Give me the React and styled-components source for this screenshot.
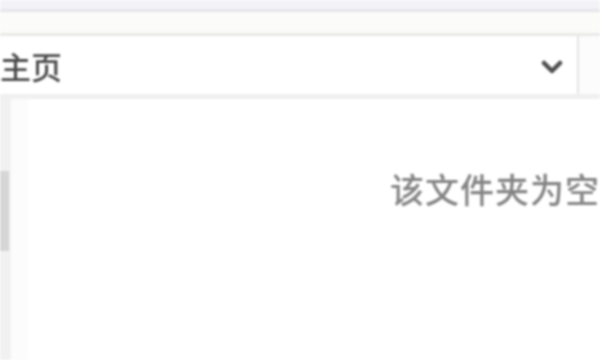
import React from 'react';
import styled, { createGlobalStyle } from 'styled-components';

const GlobalStyle = createGlobalStyle`
  html, body {
    margin: 0;
    padding: 0;
    background: #ffffff;
    overflow: hidden;
  }
  body {
    font-family: 'Noto Sans CJK SC', 'Noto Sans', sans-serif;
  }
`;

function Chevron() {
  return (
    <svg width="22" height="18" viewBox="0 0 22 18" fill="none">
      <path d="M3 5 L11 13 L19 5" stroke="#505050" strokeWidth="4.5" strokeLinecap="round" strokeLinejoin="round" />
    </svg>
  );
}

function App() {
  return (
    <>
      <GlobalStyle />
      <Window>
        <TitleStrip />
        <ToolStrip />
        <SelectRow>
          <SelectLabel>主页</SelectLabel>
          <ChevronBox>
            <Chevron />
          </ChevronBox>
          <Divider />
          <SideButton />
        </SelectRow>
        <Body>
          <Scrollbar>
            <Thumb />
          </Scrollbar>
          <Gutter />
          <Content>
            <EmptyText>该文件夹为空</EmptyText>
          </Content>
        </Body>
      </Window>
    </>
  );
}

export default App;

const Window = styled.div`
  width: 600px;
  height: 360px;
  display: flex;
  flex-direction: column;
  overflow: hidden;
  filter: blur(1.1px);
`;
const TitleStrip = styled.div`
  height: 9px;
  background: #f3f2f7;
  border-bottom: 3px solid #e6e6eb;
`;
const ToolStrip = styled.div`
  height: 21px;
  background: #fbfbfa;
  border-bottom: 3px solid #e9e9e7;
`;
const SelectRow = styled.div`
  height: 58px;
  display: flex;
  align-items: center;
  background: #ffffff;
  border-bottom: 5px solid #f0f0f0;
`;
const SelectLabel = styled.div`
  flex: 1;
  font-size: 31px;
  font-weight: 500;
  line-height: 1;
  color: #4a4a4a;
`;
const ChevronBox = styled.div`
  width: 24px;
  display: flex;
  justify-content: center;
  margin-right: 13px;
  padding-top: 4px;
`;
const Divider = styled.div`
  width: 2px;
  height: 100%;
  background: #e4e4e4;
`;
const SideButton = styled.div`
  width: 21px;
  height: 100%;
  background: #fcfcfc;
`;
const Body = styled.div`
  flex: 1;
  display: flex;
  background: #ffffff;
`;
const Scrollbar = styled.div`
  width: 10px;
  background: #f1f1f1;
  padding-top: 72px;
`;
const Thumb = styled.div`
  height: 80px;
  background: #d6d6d6;
`;
const Gutter = styled.div`
  width: 18px;
  border-left: 2px solid #f2f2f2;
  background: #fcfcfc;
`;
const Content = styled.div`
  flex: 1;
  display: flex;
  justify-content: flex-start;
  padding-left: 362px;
  padding-top: 73px;
  white-space: nowrap;
`;
const EmptyText = styled.div`
  font-size: 34px;
  font-weight: 500;
  line-height: 1;
  color: #858585;
  letter-spacing: 1px;
`;
